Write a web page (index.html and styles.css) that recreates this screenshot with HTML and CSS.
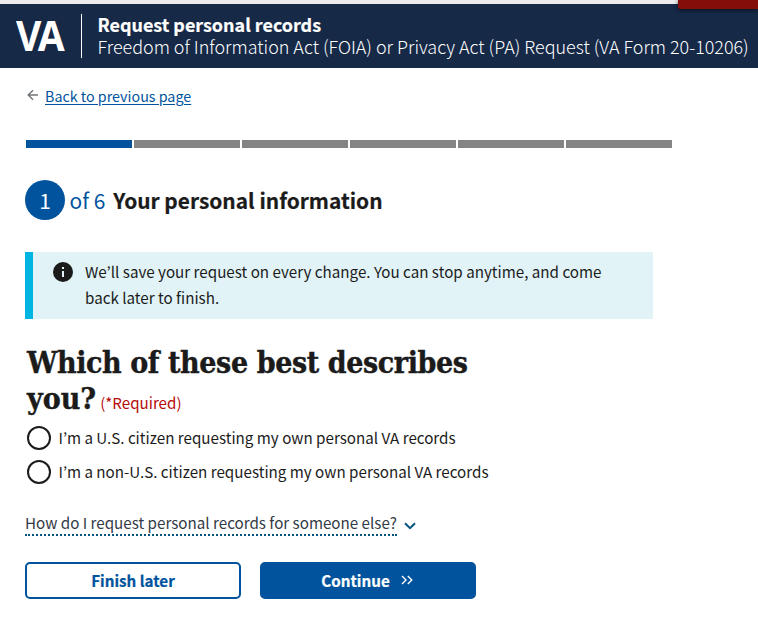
FILE: index.html
```html
<!DOCTYPE html>
<html lang="en">
<head>
<meta charset="utf-8">
<title>Request personal records</title>
<link rel="stylesheet" href="styles.css">
</head>
<body>
<header class="banner">
  <span class="corner-tab"></span>
  <div class="logo"><span>VA</span></div>
  <div class="banner-text">
    <div class="banner-title">Request personal records</div>
    <div class="banner-subtitle">Freedom of Information Act (FOIA) or Privacy Act (PA) Request (VA Form 20-10206)</div>
  </div>
</header>
<main class="page">
  <nav class="back">
    <svg class="back-arrow" width="12" height="12" viewBox="0 0 12 12"><path d="M11 6H1.5M6 1.2 1.2 6 6 10.8" fill="none" stroke="#71767a" stroke-width="1.4"/></svg>
    <a href="#">Back to previous page</a>
  </nav>
  <div class="progress"><i class="done"></i><i></i><i></i><i></i><i></i><i></i></div>
  <h2 class="step"><span class="step-number">1</span><span class="step-of">of 6</span><span class="step-name">Your personal information</span></h2>
  <section class="alert">
    <svg class="info" width="20" height="20" viewBox="0 0 20 20"><circle cx="10" cy="10" r="10" fill="#1b1b1b"/><path d="M9 5h2v2H9zM9 9h2v6H9z" fill="#e1f3f6"/></svg>
    <p>We’ll save your request on every change. You can stop anytime, and come<br>back later to finish.</p>
  </section>
  <form>
    <h1 class="question"><span class="q-line">Which of these best describes</span><br><span>you?</span><span class="required">(*Required)</span></h1>
    <label class="choice"><input type="radio" name="who"><span>I’m a U.S. citizen requesting my own personal VA records</span></label>
    <label class="choice"><input type="radio" name="who"><span>I’m a non-U.S. citizen requesting my own personal VA records</span></label>
    <div class="more"><span class="more-text">How do I request personal records for someone else?</span><svg width="12" height="8" viewBox="0 0 12 8"><path d="M1 1.2 6 6.2 11 1.2" fill="none" stroke="#005580" stroke-width="2"/></svg></div>
    <div class="actions">
      <button type="button" class="btn outline"><span>Finish later</span></button>
      <button type="button" class="btn solid"><span>Continue</span><svg width="12" height="10" viewBox="0 0 12 10"><path d="M1 1l4 4-4 4M6.8 1l4 4-4 4" fill="none" stroke="#fff" stroke-width="1.4"/></svg></button>
    </div>
  </form>
</main>
</body>
</html>
```
FILE: styles.css
```css
* { box-sizing: border-box; }
body {
  margin: 0;
  height: 617px;
  overflow: hidden;
  background: #fff;
  color: #1b1b1b;
  font: 15.18px/26px "Noto Sans CJK KR", "Open Sans", sans-serif;
  white-space: nowrap;
}
p, h1, h2 { margin: 0; }
.banner {
  position: relative;
  display: flex;
  height: 68px;
  padding: 10px 0 10px 16px;
  border-top: 4px solid #ececec;
  background: #162947;
  color: #fff;
}
.corner-tab {
  position: absolute;
  top: -4px;
  right: 0;
  width: 80px;
  height: 9px;
  border-bottom-left-radius: 2px;
  background: #830f0b;
  box-shadow: 0 1px 4px rgba(0, 0, 0, .7);
}
.logo {
  width: 66px;
  height: 44px;
  border-right: 1px solid #fff;
  font: bold 42px/42px "Open Sans", sans-serif;
  letter-spacing: -4px;
}
.logo span { display: inline-block; transform: scaleX(.93); transform-origin: left; }
.banner-text { margin-top: -1px; padding-left: 15.5px; line-height: 22px; font-size: 17.93px; }
.banner-title { height: 22px; font-weight: 700; -webkit-text-stroke: .2px #fff; }
.banner-subtitle { height: 22px; font-weight: 300; }
.page { padding: 0 25px; }
.back { display: flex; align-items: center; height: 26px; margin-top: 15px; padding-left: 2px; font-size: 14.3px; }
.back-arrow { margin: -2px 6px 0 0; }
.back a { color: #00539c; text-underline-offset: 2px; }
.progress { display: flex; gap: 2px; width: 646px; margin: 31px 0 0 1px; }
.progress i { flex: 1; height: 8px; background: #848484; }
.progress .done { background: #00539c; }
.step { display: flex; align-items: center; height: 40px; margin-top: 32px; font-size: 20.9px; font-weight: 400; }
.step-number { width: 40px; height: 40px; border-radius: 50%; background: #00539c; color: #fff; line-height: 40px; text-align: center; }
.step-of { margin-left: 4.5px; color: #00539c; line-height: 42px; }
.step-name { margin-left: 8px; font-weight: 700; line-height: 42px; -webkit-text-stroke: .2px #1b1b1b; }
.alert {
  display: flex;
  width: 628px;
  height: 67px;
  margin-top: 32px;
  padding: 6px 0 0 20px;
  border-left: 8px solid #00b5e2;
  background: #e1f3f6;
}
.info { margin: 4px 12px 0 0; }
.question { margin: 26px 0 0 2px; font: bold 30px/36px "DejaVu Serif Condensed", "DejaVu Serif", serif; -webkit-text-stroke: .4px #1b1b1b; }
.q-line { letter-spacing: -.4px; }
.required { margin-left: 4px; color: #b50909; font: 400 15.15px/20px "Noto Sans CJK KR", sans-serif; -webkit-text-stroke: 0; }
.choice { display: flex; align-items: center; height: 34px; padding-left: 2px; }
.choice span { margin-top: -2px; }
.choice input { appearance: none; width: 24px; height: 24px; margin: 0 7.5px 0 0; border: 2px solid #1b1b1b; border-radius: 50%; background: #fff; }
.question + .choice { margin-top: 4px; }
.more { display: flex; align-items: center; margin-top: 21px; height: 26px; color: #323a45; }
.more-text { height: 25px; line-height: 22px; border-bottom: 2px dotted #005580; }
.more svg { margin: 6px 0 0 7px; }
.actions { display: flex; gap: 19px; margin-top: 26px; }
.btn { display: flex; align-items: center; justify-content: center; width: 216px; height: 37px; padding: 0 0 2px; border: 2px solid #00539c; border-radius: 5px; font: 700 15.2px/26px "Noto Sans CJK KR", sans-serif; -webkit-text-stroke: .2px currentColor; }
.outline { background: #fff; color: #00539c; }
.solid { padding-right: 2px; background: #00539c; color: #fff; }
.solid svg { margin: 1px 0 0 11px; }
```
